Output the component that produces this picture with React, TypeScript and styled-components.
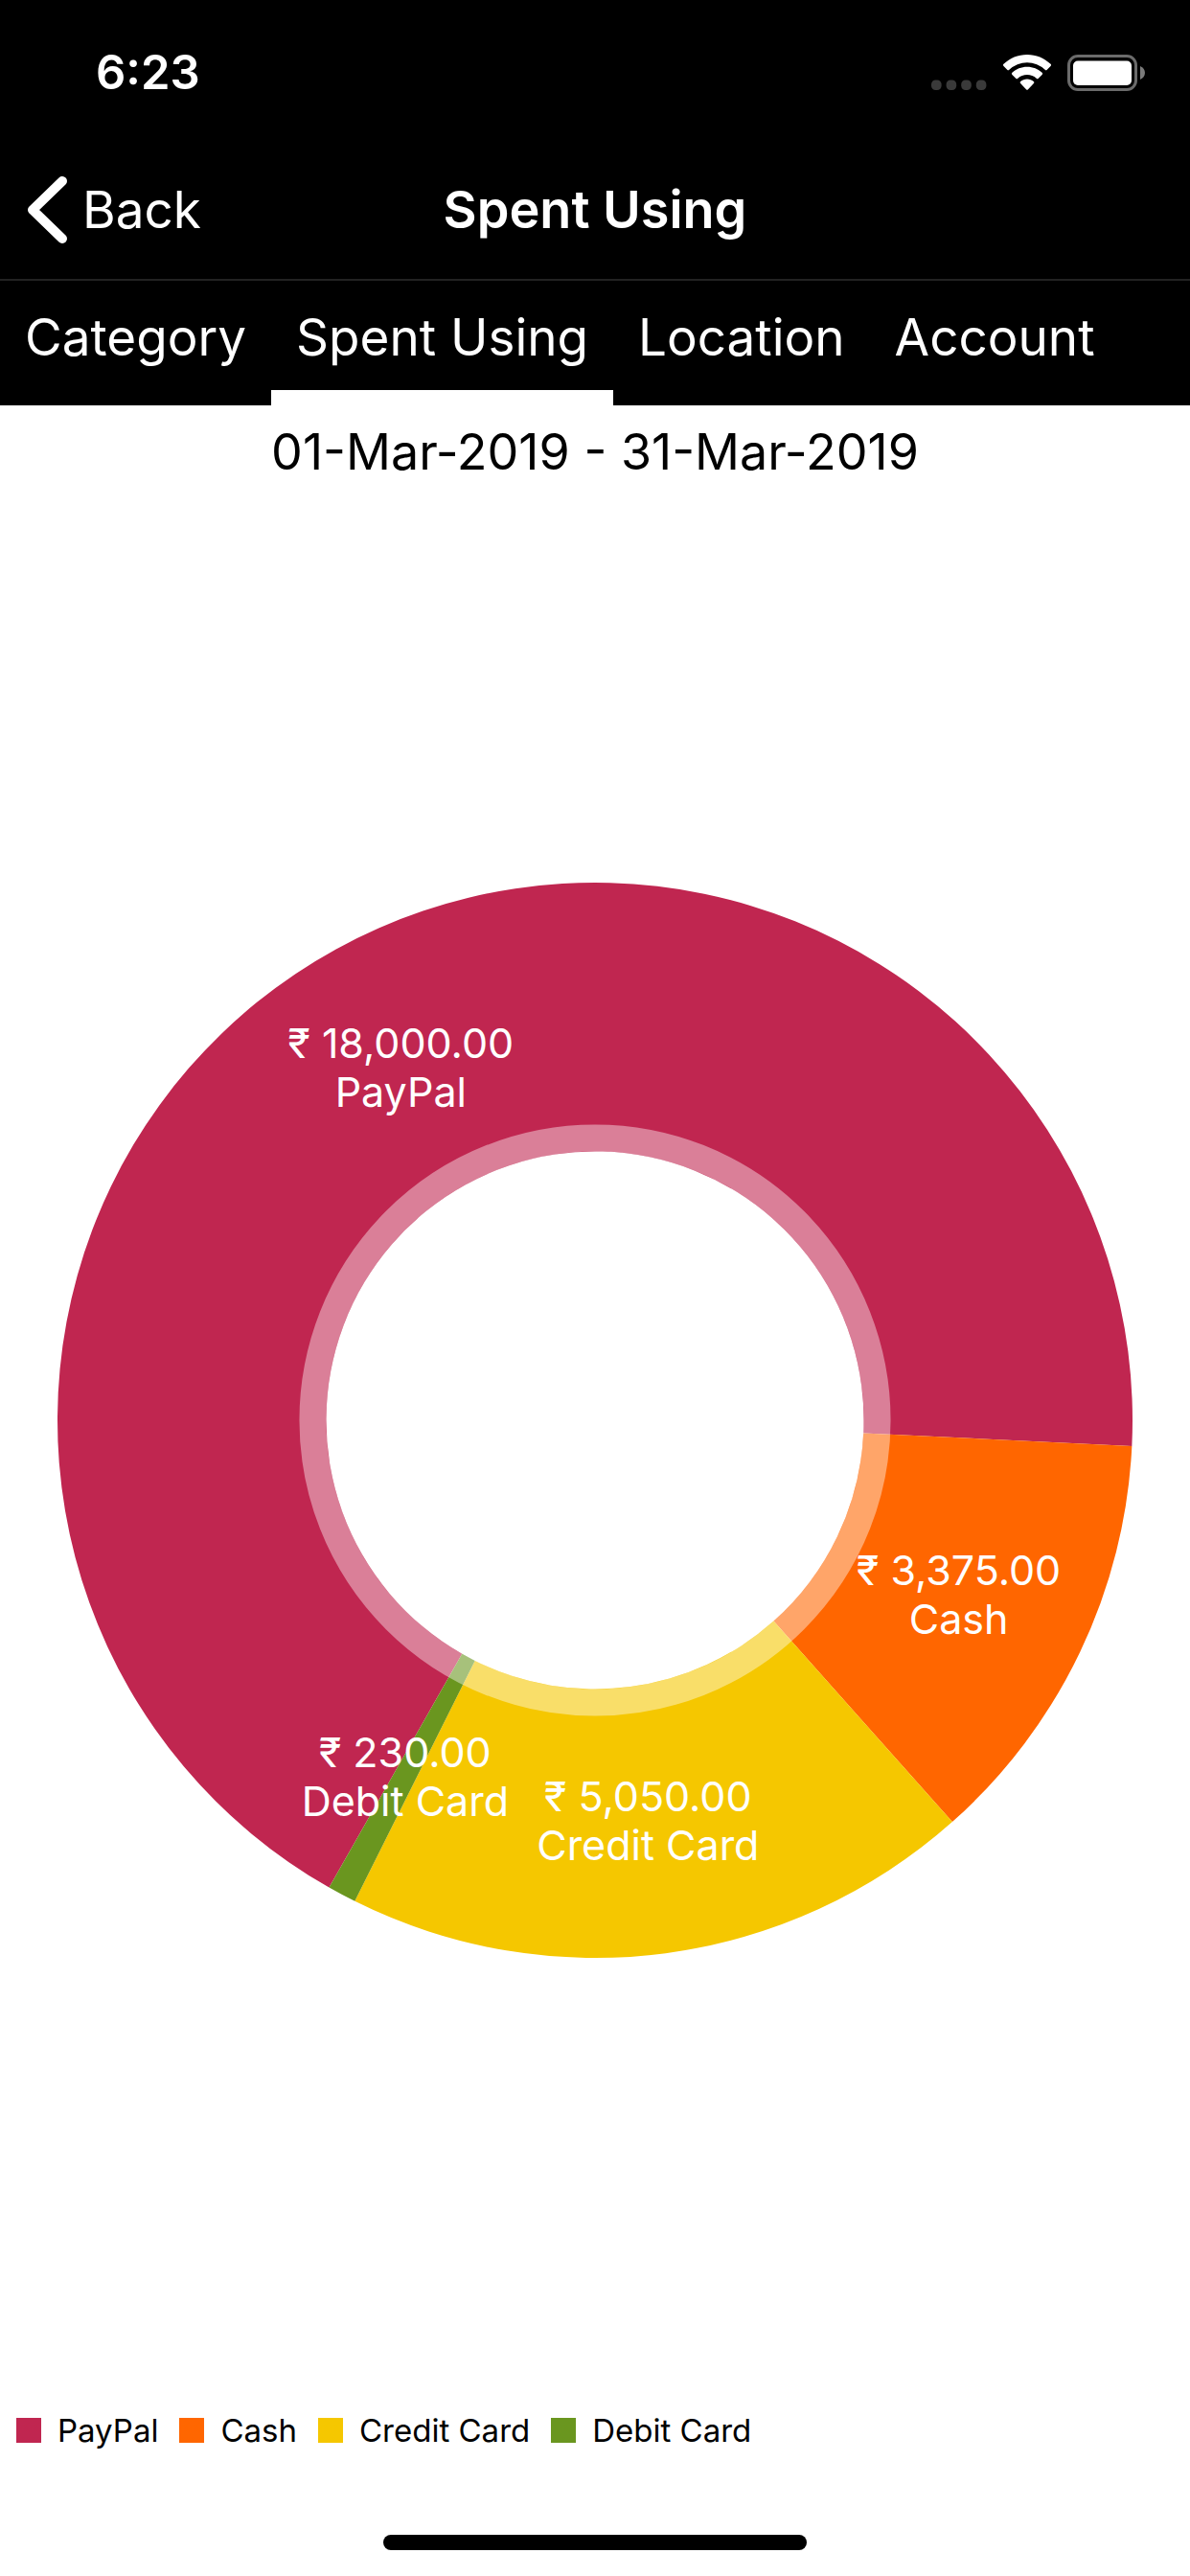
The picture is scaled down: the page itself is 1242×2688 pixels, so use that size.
import React from "react";
import styled, { createGlobalStyle } from "styled-components";

const GlobalStyle = createGlobalStyle`
  * { box-sizing: border-box; }
  body { margin: 0; background: #fff; }
`;

const Page = styled.div`
  display: flex;
  flex-direction: column;
  min-height: 100vh;
  background: #fff;
  color: #000;
  font-family: Inter, "Liberation Sans", sans-serif;
`;

const StatusBar = styled.div`
  display: flex;
  align-items: center;
  justify-content: space-between;
  height: 152px;
  padding: 0 46px 0 100px;
  background: #000;
  color: #fff;
`;

const Clock = styled.time`
  font-size: 49px;
  font-weight: 600;
  line-height: 60px;
`;

const StatusIcons = styled.div`
  display: flex;
  align-items: center;
  gap: 17px;
`;

const NavBar = styled.header`
  display: grid;
  grid-template-columns: 1fr auto 1fr;
  align-items: center;
  height: 141px;
  padding: 0 28px 6px;
  border-bottom: 2px solid #222;
  background: #000;
  color: #fff;
`;

const BackButton = styled.button`
  display: flex;
  align-items: center;
  justify-self: start;
  gap: 14px;
  padding: 0;
  border: 0;
  background: none;
  color: inherit;
  font: inherit;
  font-size: 53px;
  line-height: 72px;
`;

const Title = styled.h1`
  margin: 0;
  font-size: 54px;
  font-weight: 600;
  line-height: 72px;
`;

const Tabs = styled.nav`
  display: flex;
  height: 130px;
  background: #000;
`;

const Tab = styled.button<{ $active: boolean }>`
  padding: 4px 26px 0;
  border: 0;
  border-bottom: 16px solid ${(p) => (p.$active ? "#fff" : "#000")};
  background: none;
  color: #fff;
  font: inherit;
  font-size: 53px;
  line-height: 72px;
  white-space: nowrap;
`;

const DateRange = styled.p`
  margin: 0;
  padding: 19px 0;
  font-size: 52px;
  line-height: 60px;
  text-align: center;
`;

const ChartArea = styled.main`
  display: flex;
  flex: 1;
  align-items: center;
  padding: 0 60px;
`;

const Donut = styled.svg`
  display: block;
  width: 100%;
  overflow: visible;
`;

const SliceLabel = styled.text`
  fill: #fff;
  font-size: 43px;
  text-anchor: middle;
`;

const Legend = styled.ul`
  display: flex;
  gap: 22px;
  margin: 0;
  padding: 74px 17px 0;
  list-style: none;
`;

const LegendItem = styled.li`
  display: flex;
  align-items: center;
  gap: 17px;
  font-size: 33px;
  line-height: 40px;
  white-space: nowrap;
`;

const Swatch = styled.span<{ $color: string }>`
  width: 26px;
  height: 26px;
  background: ${(p) => p.$color};
`;

const HomeArea = styled.footer`
  display: flex;
  justify-content: center;
  padding: 89px 0 27px;
`;

const HomeIndicator = styled.div`
  width: 442px;
  height: 16px;
  border-radius: 8px;
  background: #000;
`;

const tabs = ["Category", "Spent Using", "Location", "Account"];

const slices = [
  { name: "PayPal", value: 18000, color: "#c02650" },
  { name: "Cash", value: 3375, color: "#ff6600" },
  { name: "Credit Card", value: 5050, color: "#f5c700" },
  { name: "Debit Card", value: 230, color: "#6a961f" },
];

const OUTER = 561;
const HOLE = OUTER * 0.5;
const RING = OUTER * 0.55;
const LABEL = OUTER * 0.75;
const START = 119.65;

const point = (radius: number, degrees: number) => {
  const a = (degrees * Math.PI) / 180;
  return { x: OUTER + radius * Math.cos(a), y: OUTER + radius * Math.sin(a) };
};

const slicePath = (from: number, to: number) => {
  const large = to - from > 180 ? 1 : 0;
  const a = point(OUTER, from);
  const b = point(OUTER, to);
  const c = point(HOLE, to);
  const d = point(HOLE, from);
  return `M${a.x} ${a.y}A${OUTER} ${OUTER} 0 ${large} 1 ${b.x} ${b.y}L${c.x} ${c.y}A${HOLE} ${HOLE} 0 ${large} 0 ${d.x} ${d.y}Z`;
};

const money = (value: number) =>
  value.toLocaleString("en-US", { minimumFractionDigits: 2 });

function DonutChart() {
  const total = slices.reduce((sum, s) => sum + s.value, 0);
  let angle = START;
  const arcs = slices.map((s) => {
    const from = angle;
    angle += (s.value / total) * 360;
    return { ...s, from, to: angle, label: point(LABEL, (from + angle) / 2) };
  });
  return (
    <Donut viewBox={`0 0 ${OUTER * 2} ${OUTER * 2}`} role="img" aria-label="Spending by payment method">
      {arcs.map((a) => (
        <path key={a.name} d={slicePath(a.from, a.to)} fill={a.color} />
      ))}
      <circle cx={OUTER} cy={OUTER} r={(HOLE + RING) / 2} fill="none" stroke="#fff" strokeOpacity={0.41} strokeWidth={RING - HOLE} />
      {arcs.map((a) => (
        <SliceLabel key={a.name}>
          <tspan x={a.label.x} y={a.label.y - 9}>₹ {money(a.value)}</tspan>
          <tspan x={a.label.x} y={a.label.y + 42}>{a.name}</tspan>
        </SliceLabel>
      ))}
    </Donut>
  );
}

function Cellular() {
  return (
    <svg width="58" height="38" viewBox="0 0 58 38" fill="#3a3a3a" aria-hidden="true">
      {[0, 1, 2, 3].map((i) => (
        <rect key={i} x={i * 15.6} y="26.5" width="10.6" height="10.6" rx="4.5" />
      ))}
    </svg>
  );
}

function Wifi() {
  return (
    <svg width="50" height="38" viewBox="0 0 50 38" fill="#fff" aria-hidden="true">
      <path d="M25 0C34.4 0 43.1 3.700 49.500 9.800a1.500 1.500 0 0 1 0 2.200L45.800 15.800a1.500 1.500 0 0 1-2.100 0A27 27 0 0 0 6.300 15.800a1.500 1.500 0 0 1-2.100 0L.5 12a1.500 1.500 0 0 1 0-2.200C6.900 3.700 15.600 0 25 0Z" />
      <path d="M25 12.800c6 0 11.500 2.300 15.600 6a1.500 1.500 0 0 1 0 2.200l-3.800 3.800a1.500 1.500 0 0 1-2.100 0 14.500 14.500 0 0 0-19.400 0 1.500 1.500 0 0 1-2.100 0L9.400 21a1.500 1.500 0 0 1 0-2.200c4.100-3.700 9.600-6 15.600-6Z" />
      <path d="M25 25.500c2.600 0 5 1 6.800 2.500.7.600.7 1.500.1 2.100l-5.900 6.200a1.400 1.400 0 0 1-2 0l-5.900-6.200c-.6-.6-.6-1.500.1-2.100 1.800-1.500 4.200-2.500 6.800-2.500Z" />
    </svg>
  );
}

function Battery() {
  return (
    <svg width="82" height="38" viewBox="0 0 82 38" aria-hidden="true">
      <rect x="1.500" y="1.500" width="70" height="35" rx="9.500" fill="none" stroke="#6b6b6b" strokeWidth="3" />
      <rect x="6" y="6.500" width="61" height="25.500" rx="5" fill="#fff" />
      <path d="M76 12c3 1.200 5 4 5 7s-2 5.800-5 7Z" fill="#7a7a7a" />
    </svg>
  );
}

export default function App() {
  return (
    <Page>
      <GlobalStyle />
      <StatusBar>
        <Clock>6:23</Clock>
        <StatusIcons>
          <Cellular />
          <Wifi />
          <Battery />
        </StatusIcons>
      </StatusBar>
      <NavBar>
        <BackButton type="button">
          <svg width="44" height="72" viewBox="0 0 44 72" fill="none" stroke="#fff" strokeWidth="10" strokeLinecap="round" strokeLinejoin="round" aria-hidden="true">
            <path d="M37 6 6 36l31 30" />
          </svg>
          Back
        </BackButton>
        <Title>Spent Using</Title>
      </NavBar>
      <Tabs>
        {tabs.map((name) => (
          <Tab key={name} type="button" $active={name === "Spent Using"}>
            {name}
          </Tab>
        ))}
      </Tabs>
      <DateRange>01-Mar-2019 - 31-Mar-2019</DateRange>
      <ChartArea>
        <DonutChart />
      </ChartArea>
      <Legend>
        {slices.map((s) => (
          <LegendItem key={s.name}>
            <Swatch $color={s.color} />
            {s.name}
          </LegendItem>
        ))}
      </Legend>
      <HomeArea>
        <HomeIndicator />
      </HomeArea>
    </Page>
  );
}
